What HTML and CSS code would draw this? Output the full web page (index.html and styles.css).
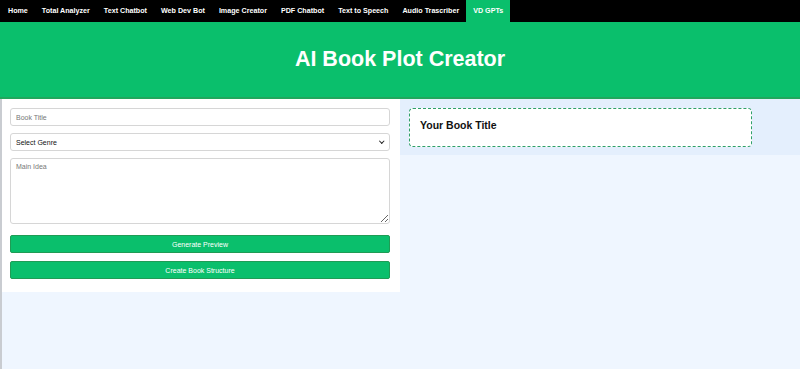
FILE: index.html
```html
<!DOCTYPE html>
<html lang="en">
<head>
    <meta charset="UTF-8">
    <meta name="viewport" content="width=device-width, initial-scale=1.0">
    <title>AI Book Plot Creator</title>
    <link rel="stylesheet" href="styles.css">
</head>
<body>
    <nav class="navbar">
        <a href="#">Home</a>
        <a href="#">Total Analyzer</a>
        <a href="#">Text Chatbot</a>
        <a href="#">Web Dev Bot</a>
        <a href="#">Image Creator</a>
        <a href="#">PDF Chatbot</a>
        <a href="#">Text to Speech</a>
        <a href="#">Audio Trascriber</a>
        <a href="#" class="active">VD GPTs</a>
    </nav>

    <header class="header">
        <h1>AI Book Plot Creator</h1>
    </header>

    <main class="container">
        <section class="form-panel">
            <input type="text" class="field" placeholder="Book Title">
            <div class="select-wrap">
                <select class="field">
                    <option>Select Genre</option>
                    <option>Fantasy</option>
                    <option>Mystery</option>
                    <option>Science Fiction</option>
                    <option>Romance</option>
                </select>
            </div>
            <textarea class="field idea" placeholder="Main Idea"></textarea>
            <button class="btn btn-first">Generate Preview</button>
            <button class="btn">Create Book Structure</button>
        </section>

        <section class="preview-panel">
            <div class="preview-card">
                <h3>Your Book Title</h3>
            </div>
        </section>
    </main>
</body>
</html>
```

FILE: styles.css
```css
* {
    margin: 0;
    padding: 0;
    box-sizing: border-box;
}

body {
    font-family: 'Liberation Sans', Arial, sans-serif;
    background: #eff6ff;
    min-height: 100vh;
    color: #111;
}

.navbar {
    display: flex;
    background: #000;
    height: 22px;
    padding-left: 1px;
}

.navbar a {
    color: white;
    text-decoration: none;
    font-size: 7.15px;
    font-weight: bold;
    line-height: 22px;
    padding: 0 7px;
}

.navbar a.active {
    background: #0abf6c;
}

.header {
    background: #0abf6c;
    border-bottom: 2px solid #20a75d;
    height: 77px;
    display: flex;
    align-items: center;
    justify-content: center;
}

.header h1 {
    color: white;
    font-size: 21.5px;
    font-weight: bold;
}

.container {
    display: flex;
    align-items: flex-start;
    border-left: 2px solid #c9ccd1;
    min-height: 270px;
}

.form-panel {
    width: 398px;
    background: white;
    padding: 9px 10px 13px 8px;
    display: flex;
    flex-direction: column;
}

.field {
    font-family: 'Liberation Sans', Arial, sans-serif;
    font-size: 7px;
    height: 18px;
    border: 1px solid #d6d6d6;
    border-radius: 3px;
    padding: 0 5px;
    margin-bottom: 7px;
    background: white;
    color: #111;
}

.field::placeholder {
    color: #777;
}

.select-wrap {
    position: relative;
    display: flex;
    flex-direction: column;
}

.select-wrap select {
    appearance: none;
    -webkit-appearance: none;
    padding-left: 5px;
}

/* small chevron over the select */
.select-wrap::after {
    content: '';
    position: absolute;
    right: 7px;
    top: 6px;
    width: 2.5px;
    height: 2.5px;
    border-right: 1.2px solid #222;
    border-bottom: 1.2px solid #222;
    transform: rotate(45deg);
    pointer-events: none;
}

.idea {
    height: 66px;
    padding-top: 4px;
    resize: vertical;
    margin-bottom: 11px;
}

.btn {
    font-family: 'Liberation Sans', Arial, sans-serif;
    font-size: 7px;
    height: 18px;
    background: #0abf6c;
    color: white;
    border: 1px solid #1f9c55;
    border-radius: 2px;
    cursor: pointer;
}

.btn-first {
    margin-bottom: 8px;
}

.preview-panel {
    width: 400px;
    background: #e4effd;
    padding: 9px 48px 8px 9px;
}

.preview-card {
    background: white;
    border: 1px dashed #2fa068;
    border-radius: 4px;
    height: 39px;
    padding: 9px 10px;
}

.preview-card h3 {
    font-size: 10.5px;
    line-height: 14px;
    font-weight: bold;
}
```
